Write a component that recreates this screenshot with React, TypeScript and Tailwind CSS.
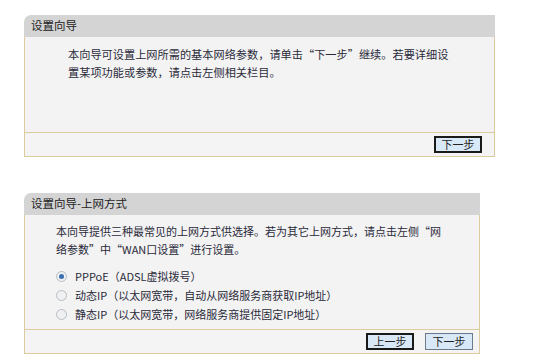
import { ReactNode } from 'react';

const font = { fontFamily: '"SimSun", "Noto Sans CJK SC", sans-serif' };

function Btn({ label, focused }: { label: string; focused?: boolean }) {
  return (
    <button
      className={`h-[17px] w-[48px] bg-[#d9e8f6] text-[11px] leading-none text-[#222] ${
        focused ? 'border-2 border-[#1a1a1a]' : 'border border-[#6b7a88]'
      }`}
    >
      {label}
    </button>
  );
}

function Radio({ checked }: { checked?: boolean }) {
  return (
    <span className="mr-[8px] flex h-[11px] w-[11px] items-center justify-center rounded-full border border-[#b9bec4] bg-[#eef0f2]">
      {checked && <span className="h-[5px] w-[5px] rounded-full bg-[#3b6fb0]" />}
    </span>
  );
}

function Panel({
  title,
  width,
  bodyH,
  footPad,
  children,
  footer,
}: {
  title: string;
  width: string;
  bodyH: string;
  footPad: string;
  children: ReactNode;
  footer: ReactNode;
}) {
  return (
    <div className={width}>
      <div className="flex h-[22px] items-center rounded-tl-[7px] bg-[#d4d4d4] pl-[7px] text-[11.5px] text-[#222]">
        {title}
      </div>
      <div className="border-x border-b border-[#dccb9c] bg-[#f3f3f3]">
        <div className={bodyH}>{children}</div>
        <div className={`flex h-[24px] items-center justify-end gap-[11px] border-t border-[#dccb9c] bg-[#f4f4f4] ${footPad}`}>
          {footer}
        </div>
      </div>
    </div>
  );
}

export default function App() {
  return (
    <div className="min-h-[363px] bg-white pl-[24px] pt-[15px]" style={font}>
      <Panel
        title="设置向导"
        width="w-[471px]"
        bodyH="h-[95px] pl-[43px] pt-[8px]"
        footPad="pr-[12px]"
        footer={<Btn label="下一步" focused />}
      >
        <p className="text-[11.2px] leading-[18px] text-[#2a2a3a]">
          本向导可设置上网所需的基本网络参数，请单击“下一步”继续。若要详细设
          <br />
          置某项功能或参数，请点击左侧相关栏目。
        </p>
      </Panel>

      <div className="h-[36px]" />

      <Panel
        title="设置向导-上网方式"
        width="w-[456px]"
        bodyH="h-[114px] pl-[31px] pt-[7px]"
        footPad="pr-[6px]"
        footer={
          <>
            <Btn label="上一步" focused />
            <Btn label="下一步" />
          </>
        }
      >
        <p className="text-[11px] leading-[18px] text-[#2a2a3a]">
          本向导提供三种最常见的上网方式供选择。若为其它上网方式，请点击左侧“网
          <br />
          络参数”中“WAN口设置”进行设置。
        </p>
        <div className="mt-[9px] flex flex-col text-[11px] leading-[19px] text-[#2a2a3a]">
          <label className="flex items-center">
            <Radio checked />
            PPPoE（ADSL虚拟拨号）
          </label>
          <label className="flex items-center">
            <Radio />
            动态IP（以太网宽带，自动从网络服务商获取IP地址）
          </label>
          <label className="flex items-center">
            <Radio />
            静态IP（以太网宽带，网络服务商提供固定IP地址）
          </label>
        </div>
      </Panel>
    </div>
  );
}
